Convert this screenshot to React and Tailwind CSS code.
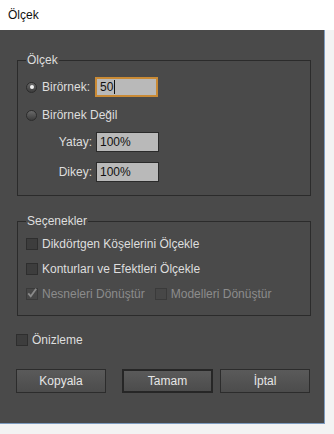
import React from 'react';

const font = { fontFamily: '"Liberation Sans", Arial, sans-serif' };

const Radio = ({ checked }) => (
	<span className="w-[11px] h-[11px] rounded-full border border-[#2c2c2c] bg-gradient-to-b from-[#6a6a6a] to-[#3c3c3c] flex items-center justify-center flex-shrink-0">
		{checked && <span className="w-[4px] h-[4px] rounded-full bg-[#f2f2f2]" />}
	</span>
);

const Check = ({ checked, disabled }) => (
	<span className={`w-[12px] h-[12px] border flex items-center justify-center flex-shrink-0 ${disabled ? 'border-[#3a3a3a] bg-[#474747]' : 'border-[#2e2e2e] bg-[#3d3d3d]'}`}>
		{checked && (
			<svg width="12" height="12" viewBox="0 0 12 12" className="-mt-[2px]">
				<path d="M1.5 6.5 L4.5 10 L11 1" fill="none" stroke="#8a8a8a" strokeWidth="2.2" />
			</svg>
		)}
	</span>
);

const Field = ({ value, focused, caret }) => (
	<div className={`w-[63px] h-[20px] flex items-center pl-[3px] text-[12px] text-[#111] bg-[#b9b9b9] ${focused ? 'border-2 border-[#c98a35]' : 'border border-[#2a2a2a]'}`}>
		{value}
		{caret && <span className="w-px h-[14px] bg-[#111] ml-px" />}
	</div>
);

const Group = ({ title, children, className }) => (
	<fieldset className={`ml-px w-[294px] border border-[#2b2b2b] px-[8px] ${className}`}>
		<legend className="px-[1px] text-[12px] leading-[14px] text-[#dedede]">{title}</legend>
		{children}
	</fieldset>
);

const Button = ({ label, primary, className }) => (
	<button className={`h-[24px] text-[12px] text-[#e6e6e6] bg-gradient-to-b from-[#5a5a5a] to-[#4c4c4c] ${primary ? 'border-2 border-[#262626]' : 'border border-[#2c2c2c]'} ${className}`}>
		{label}
	</button>
);

export default function App() {
	return (
		<div className="w-[334px] h-[434px] bg-[#f3f3f3] flex flex-col overflow-hidden" style={font}>
			<div className="h-[30px] bg-white flex items-center pl-[8px] text-[12px] text-[#111] flex-shrink-0">Ölçek</div>
			<div className="flex flex-1">
				<div className="w-[325px] h-[394px] bg-[#4a4a4a] border-r border-b border-[#7d9cc0] pl-[16px] flex flex-col">
					<Group title="Ölçek" className="mt-[23px] pb-[13px]">
						<div className="mt-[10px] h-[20px] flex items-center">
							<Radio checked />
							<span className="ml-[5px] w-[48px] text-[12px] text-[#dedede]">Birörnek:</span>
							<div className="ml-[5px]"><Field value="50" focused caret /></div>
						</div>
						<div className="mt-[8px] h-[20px] flex items-center">
							<Radio />
							<span className="ml-[5px] text-[12px] text-[#dedede]">Birörnek Değil</span>
						</div>
						<div className="mt-[7px] h-[20px] flex items-center">
							<span className="w-[66px] text-right text-[12px] text-[#dedede]">Yatay:</span>
							<div className="ml-[4px]"><Field value="100%" /></div>
						</div>
						<div className="mt-[10px] h-[20px] flex items-center">
							<span className="w-[66px] text-right text-[12px] text-[#dedede]">Dikey:</span>
							<div className="ml-[4px]"><Field value="100%" /></div>
						</div>
					</Group>

					<Group title="Seçenekler" className="mt-[18px] pb-[12px]">
						<div className="mt-[7px] h-[18px] flex items-center">
							<Check />
							<span className="ml-[4px] text-[12px] text-[#dedede]">Dikdörtgen Köşelerini Ölçekle</span>
						</div>
						<div className="mt-[7px] h-[18px] flex items-center">
							<Check />
							<span className="ml-[4px] text-[12px] text-[#dedede]">Konturları ve Efektleri Ölçekle</span>
						</div>
						<div className="mt-[7px] h-[18px] flex items-center">
							<Check checked disabled />
							<span className="ml-[4px] text-[12px] text-[#8c8c8c]">Nesneleri Dönüştür</span>
							<span className="ml-[10px]"><Check disabled /></span>
							<span className="ml-[4px] text-[12px] text-[#8c8c8c]">Modelleri Dönüştür</span>
						</div>
					</Group>

					<div className="mt-[15px] h-[18px] flex items-center">
						<Check />
						<span className="ml-[4px] text-[12px] text-[#dedede]">Önizleme</span>
					</div>

					<div className="mt-[20px] flex items-center">
						<Button label="Kopyala" className="w-[90px]" />
						<Button label="Tamam" primary className="ml-[16px] w-[91px]" />
						<Button label="İptal" className="ml-[7px] w-[90px]" />
					</div>
				</div>
			</div>
		</div>
	);
}
